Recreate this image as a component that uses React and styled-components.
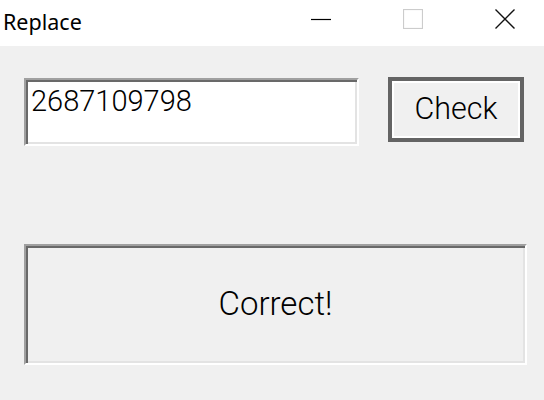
import styled, { createGlobalStyle } from 'styled-components';

const Global = createGlobalStyle`
    html, body {
        margin: 0;
        padding: 0;
        background: #f0f0f0;
    }
`

const Window = styled.div`
    width: 544px;
    height: 400px;
    background: #f0f0f0;
    display: flex;
    flex-direction: column;
    overflow: hidden;
`

const TitleBar = styled.div`
    height: 46px;
    background: #fff;
    display: flex;
    align-items: flex-start;
    padding: 0 29px 0 3px;
    box-sizing: border-box;
`

const Title = styled.div`
    flex: 1;
    font-family: "Noto Sans", "Open Sans", sans-serif;
    font-size: 21.5px;
    line-height: 43px;
    color: #000;
`

const Captions = styled.div`
    display: flex;
    gap: 72px;
    padding-top: 9px;
`

const Icon = styled.svg`
    display: block;
    width: 20px;
    height: 20px;
`

const Content = styled.div`
    display: flex;
    flex-direction: column;
    padding: 31px 0 0 24px;
`

const TopRow = styled.div`
    display: flex;
    align-items: flex-start;
    gap: 29px;
`

const Sunken = styled.div`
    box-sizing: border-box;
    border: 2px solid;
    border-color: #a0a0a0 #fff #fff #a0a0a0;
    box-shadow: inset 2px 2px 0 #696969, inset -2px -2px 0 #e3e3e3;
    font-family: Roboto, "Liberation Sans", sans-serif;
    font-weight: 300;
    color: #000;
`

const Field = styled(Sunken)`
    width: 335px;
    height: 68px;
    margin-top: 1px;
    background: #fff;
    padding: 5px 0 0 5px;
    font-size: 29px;
    line-height: 32px;
`

const Status = styled(Sunken)`
    width: 503px;
    height: 121px;
    margin-top: 98px;
    background: #f0f0f0;
    display: flex;
    align-items: center;
    justify-content: center;
    font-size: ${p => p.size}px;
    padding-bottom: 2px;
`

const Button = styled.button`
    box-sizing: border-box;
    width: 136px;
    height: 65px;
    border: 4px solid #646464;
    box-shadow: inset 0 0 0 2px #fff;
    background: #f0f0f0;
    font-family: Roboto, "Liberation Sans", sans-serif;
    font-weight: 300;
    font-size: 30.5px;
    color: #000;
    padding: 0 0 3px 0;
    cursor: pointer;
`

function App() {
    return (
        <>
            <Global />
            <Window>
                <TitleBar>
                    <Title>Replace</Title>
                    <Captions>
                        <Icon viewBox="0 0 20 20">
                            <line x1="0" y1="10.5" x2="20" y2="10.5" stroke="#000" strokeWidth="1.2" />
                        </Icon>
                        <Icon viewBox="0 0 20 20">
                            <rect x="0.5" y="0.5" width="19" height="19" fill="none" stroke="#cccccc" strokeWidth="1.2" />
                        </Icon>
                        <Icon viewBox="0 0 20 20">
                            <path d="M0.5 0.5 L19.5 19.5 M19.5 0.5 L0.5 19.5" stroke="#111" strokeWidth="1.4" fill="none" />
                        </Icon>
                    </Captions>
                </TitleBar>
                <Content>
                    <TopRow>
                        <Field>2687109798</Field>
                        <Button>Check</Button>
                    </TopRow>
                    <Status size={33}>Correct!</Status>
                </Content>
            </Window>
        </>
    )
}

export default App
